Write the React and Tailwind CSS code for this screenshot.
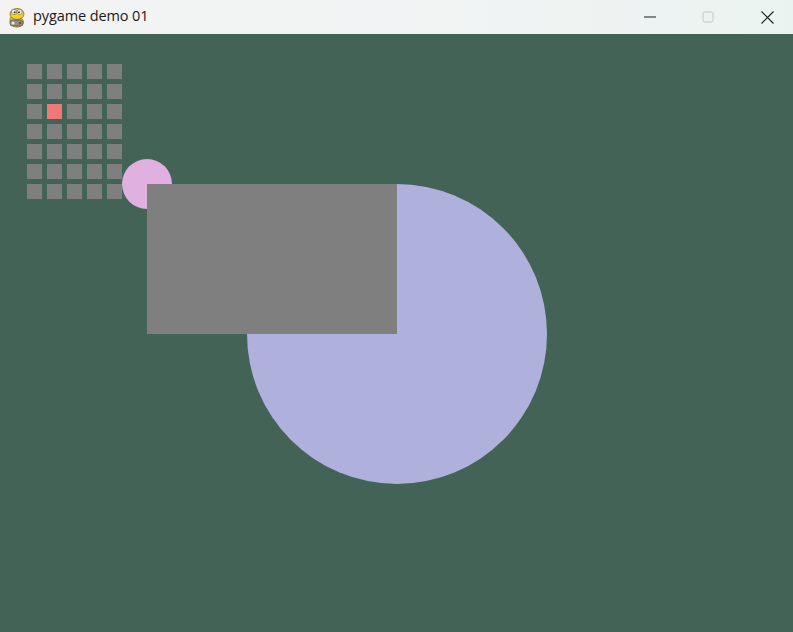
import React from "react";

function PygameIcon() {
  return (
    <svg width="20" height="22" viewBox="0 0 20 22" className="block">
      <path d="M4 10 C2 13 3 17 6 19 C9 21 14 20 16 17 C17 15 16 12 14 11 Z" fill="#e8c619" stroke="#8a7410" strokeWidth="0.8" />
      <ellipse cx="10" cy="7" rx="7" ry="5.5" fill="#f2d21e" stroke="#8a7410" strokeWidth="0.8" />
      <circle cx="7" cy="5" r="2.6" fill="#fff" stroke="#555" strokeWidth="0.6" />
      <circle cx="12.5" cy="5" r="2.6" fill="#fff" stroke="#555" strokeWidth="0.6" />
      <circle cx="7.6" cy="5.3" r="1" fill="#222" />
      <circle cx="12" cy="5.3" r="1" fill="#222" />
      <rect x="3" y="13" width="13" height="6" rx="2.5" fill="#8f8f8f" stroke="#444" strokeWidth="0.6" />
      <circle cx="6" cy="16" r="1.6" fill="#e9e9e9" />
      <circle cx="13" cy="16" r="1.2" fill="#b03030" />
    </svg>
  );
}

export default function App() {
  const cols = [0, 1, 2, 3, 4];
  const rows = [0, 1, 2, 3, 4, 5, 6];
  return (
    <div className="w-[793px] h-[632px] overflow-hidden flex flex-col bg-[#436357]">
      <div className="h-[34px] shrink-0 flex items-center bg-gradient-to-r from-[#f3f3f3] via-[#f2f3f4] to-[#ebf3f1]">
        <div className="w-[33px] flex justify-center pl-[1px] pt-[1px]">
          <PygameIcon />
        </div>
        <span className="text-[14.5px] text-[#1a1a1a] leading-none pb-[1px] font-['Open_Sans',sans-serif] tracking-[-0.1px]">
          pygame demo 01
        </span>
        <div className="ml-auto flex h-full">
          <div className="w-[50px] h-full flex items-center justify-center">
            <svg width="12" height="2" viewBox="0 0 12 2"><rect x="0" y="0.5" width="12" height="1" fill="#1a1a1a" /></svg>
          </div>
          <div className="w-[66px] h-full flex items-center justify-center">
            <svg width="12" height="12" viewBox="0 0 12 12"><rect x="1" y="1" width="10" height="10" rx="1.5" fill="none" stroke="#c4c4c4" strokeWidth="1" /></svg>
          </div>
          <div className="w-[52px] h-full flex items-center justify-center">
            <svg width="13" height="13" viewBox="0 0 13 13"><path d="M0.5 0.5 L12.5 12.5 M12.5 0.5 L0.5 12.5" stroke="#1a1a1a" strokeWidth="1.1" /></svg>
          </div>
        </div>
      </div>
      <div className="flex-1 relative">
        <svg width="793" height="598" viewBox="0 0 793 598" className="block" shapeRendering="crispEdges">
          {rows.map((r) =>
            cols.map((c) => (
              <rect
                key={`${r}-${c}`}
                x={27 + c * 20}
                y={30 + r * 20}
                width="15"
                height="15"
                fill={r === 2 && c === 1 ? "#f07878" : "#7f7f7f"}
              />
            ))
          )}
          <circle cx="147" cy="150" r="25" fill="#e0b0e0" shapeRendering="auto" />
          <circle cx="397" cy="300" r="150" fill="#b0b0dc" shapeRendering="auto" />
          <rect x="147" y="150" width="250" height="150" fill="#7f7f7f" />
        </svg>
      </div>
    </div>
  );
}
